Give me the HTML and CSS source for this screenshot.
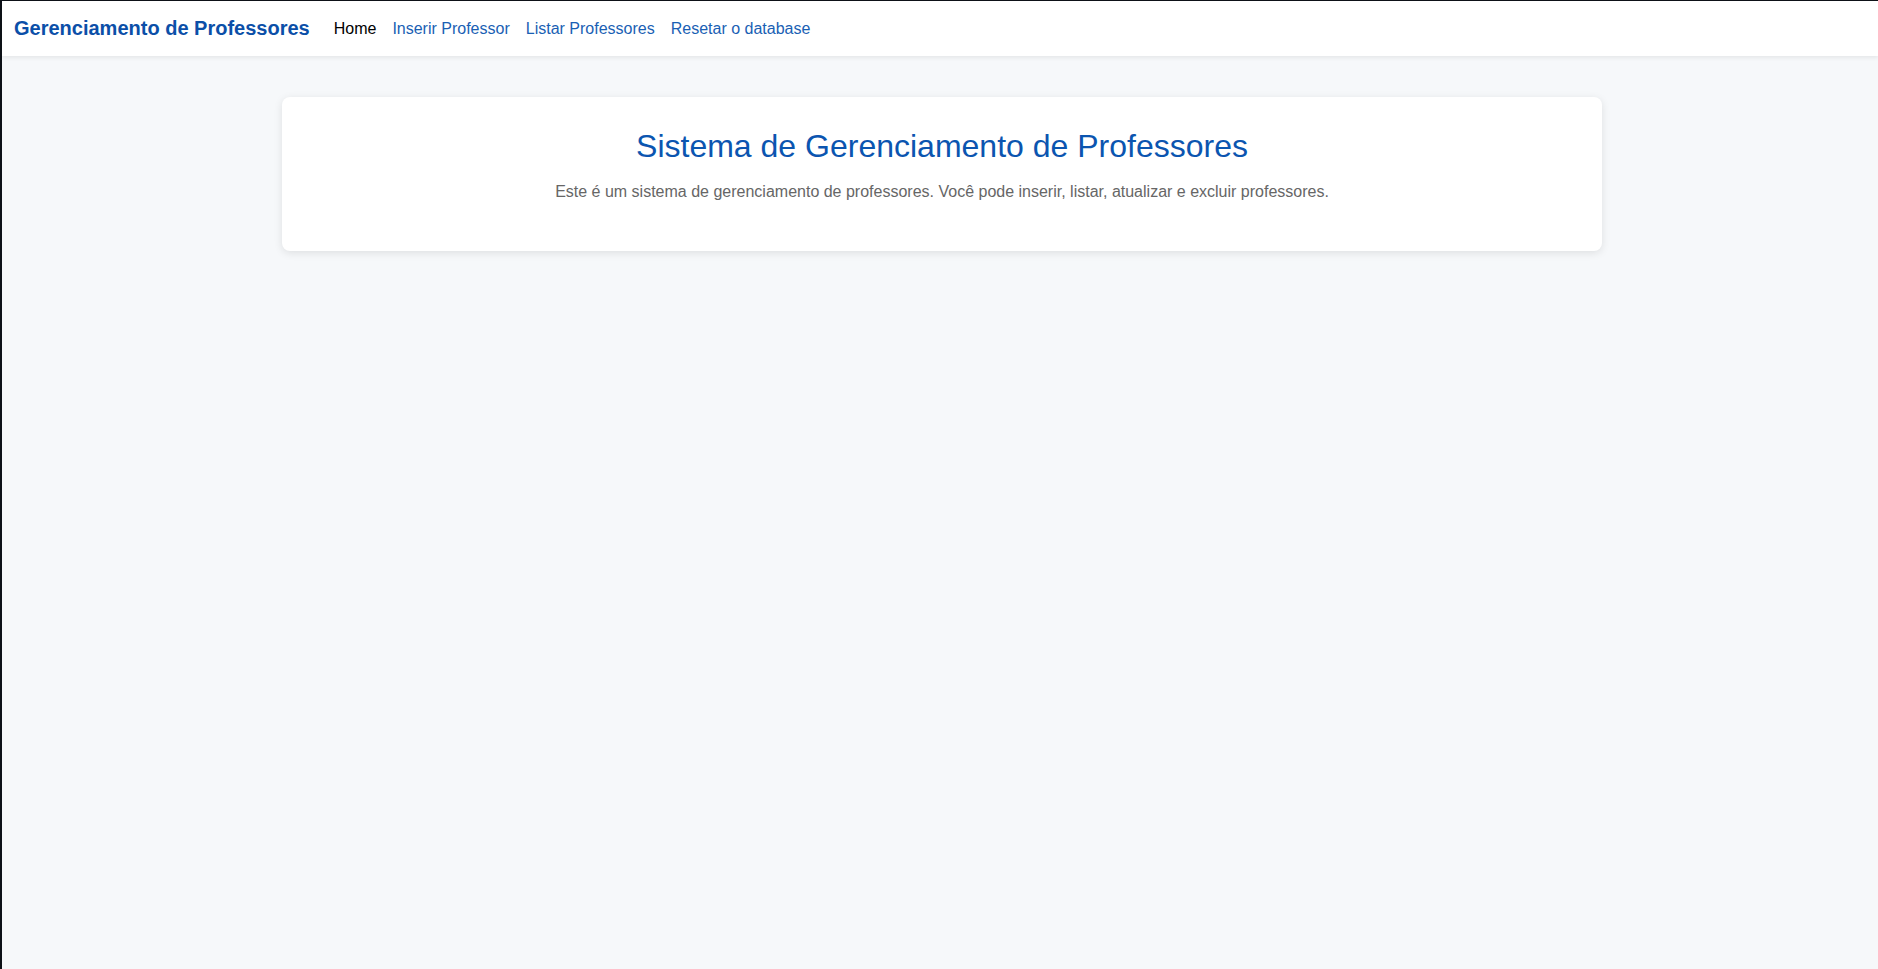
FILE: index.html
```html
<!DOCTYPE html>
<html lang="pt-BR">
<head>
<meta charset="utf-8">
<title>Gerenciamento de Professores</title>
<link rel="stylesheet" href="styles.css">
</head>
<body>
<nav class="navbar">
  <a class="brand" href="#">Gerenciamento de Professores</a>
  <ul class="nav-links">
    <li><a class="nav-link active" href="#">Home</a></li>
    <li><a class="nav-link" href="#">Inserir Professor</a></li>
    <li><a class="nav-link" href="#">Listar Professores</a></li>
    <li><a class="nav-link" href="#">Resetar o database</a></li>
  </ul>
</nav>
<main class="container">
  <section class="card">
    <h1 class="title">Sistema de Gerenciamento de Professores</h1>
    <p class="lead">Este é um sistema de gerenciamento de professores. Você pode inserir, listar, atualizar e excluir professores.</p>
  </section>
</main>
</body>
</html>
```
FILE: styles.css
```css
* { box-sizing: border-box; }
html, body { height: 100%; }
body {
  margin: 0;
  font-family: "Liberation Sans", Arial, sans-serif;
  background: #f6f8fa;
  border-left: 2px solid #0d1117;
  border-top: 1px solid #0d1117;
  color: #333;
}
.navbar {
  display: flex;
  align-items: center;
  height: 55px;
  padding: 0 12px;
  background: #fff;
  box-shadow: 0 2px 4px rgba(0, 0, 0, 0.07);
}
.brand {
  font-size: 20px;
  font-weight: bold;
  color: #0b4fa8;
  text-decoration: none;
  margin-right: 24px;
}
.nav-links {
  display: flex;
  gap: 16px;
  list-style: none;
  margin: 0;
  padding: 0;
}
.nav-link {
  font-size: 16px;
  color: #1a5fb4;
  text-decoration: none;
}
.nav-link.active { color: #000; }
.container {
  max-width: 1324px;
  margin: 41px auto 0;
  padding-left: 4px;
}
.card {
  background: #fff;
  border-radius: 8px;
  box-shadow: 0 2px 8px rgba(0, 0, 0, 0.1);
  padding: 31px 32px 50px;
  text-align: center;
}
.title {
  margin: 0 0 18px;
  font-size: 32px;
  font-weight: normal;
  color: #0b55b0;
}
.lead {
  margin: 0;
  font-size: 16px;
  color: #666;
}
```
